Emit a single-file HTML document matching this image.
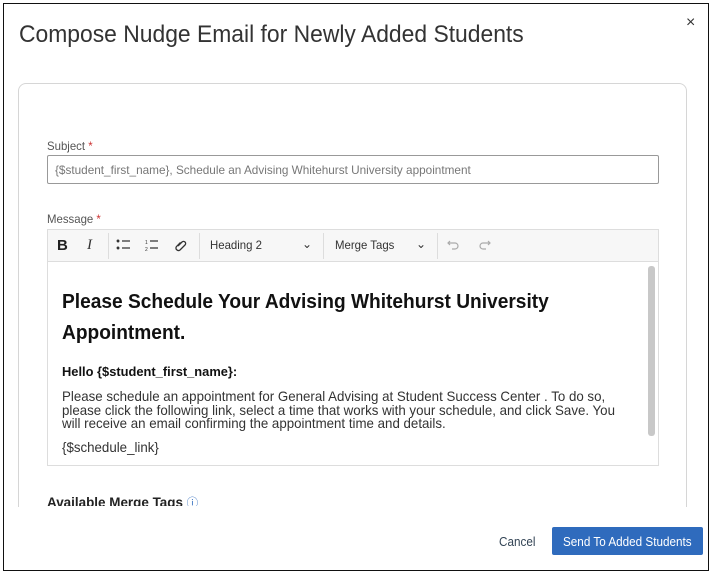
<!DOCTYPE html>
<html><head><style>
*{margin:0;padding:0;box-sizing:border-box}
body{width:713px;height:575px;background:#fff;font-family:"Liberation Sans",Arial,sans-serif;color:#222;position:relative;overflow:hidden}
.a{position:absolute;white-space:nowrap}
.sx{transform-origin:0 0;display:inline-block}
</style></head><body>
<div class="a" style="left:3px;top:3px;width:706px;height:568px;border:1.5px solid #111"></div>
<div class="a" style="left:19px;top:21px;font-size:24px;color:#333"><span class="sx" style="transform:scaleX(0.953)">Compose Nudge Email for Newly Added Students</span></div>
<div class="a" style="left:686px;top:14px;font-size:16px;color:#333">×</div>
<div class="a" style="left:18px;top:83px;width:669px;height:440px;border:1px solid #d6d6d6;border-radius:8px"></div>
<div class="a" style="left:8px;top:507px;width:698px;height:60px;background:#fff"></div>
<div class="a" style="left:47px;top:139px;font-size:12px;color:#555"><span class="sx" style="transform:scaleX(0.95)">Subject <span style="color:#c33">*</span></span></div>
<div class="a" style="left:47px;top:155px;width:612px;height:29px;border:1px solid #999;border-radius:2px"></div>
<div class="a" style="left:55px;top:163px;font-size:12px;color:#777"><span class="sx" style="transform:scaleX(0.98)">{$student_first_name}, Schedule an Advising Whitehurst University appointment</span></div>
<div class="a" style="left:47px;top:212px;font-size:12px;color:#555"><span class="sx" style="transform:scaleX(0.95)">Message <span style="color:#c33">*</span></span></div>
<div class="a" style="left:47px;top:229px;width:612px;height:237px;border:1px solid #ddd"></div>
<div class="a" style="left:48px;top:230px;width:610px;height:32px;background:#f7f7f7;border-bottom:1px solid #ddd"></div>
<div class="a" style="left:57px;top:237px;font-size:15px;font-weight:bold;color:#222">B</div>
<div class="a" style="left:87px;top:237px;font-size:15px;font-style:italic;font-family:'Liberation Serif',serif;color:#333">I</div>
<div class="a" style="left:108px;top:233px;width:1px;height:26px;background:#ddd"></div>
<div class="a" style="left:199px;top:233px;width:1px;height:26px;background:#ddd"></div>
<div class="a" style="left:323px;top:233px;width:1px;height:26px;background:#ddd"></div>
<div class="a" style="left:437px;top:233px;width:1px;height:26px;background:#ddd"></div>
<svg class="a" style="left:115px;top:237px" width="80" height="16" viewBox="0 0 80 16" fill="none" stroke="#333" stroke-width="1.3">
<circle cx="3" cy="4" r=".8" fill="#333"/><circle cx="3" cy="11" r=".8" fill="#333"/><path d="M7 4h8M7 11h8"/>
<text x="30" y="7" font-size="5" fill="#333" stroke="none">1</text><text x="30" y="14" font-size="5" fill="#333" stroke="none">2</text><path d="M35 4h8M35 11h8"/>
<path d="M63 9l4-4a2 2 0 0 1 3 3l-5 5a2.5 2.5 0 0 1-3.5-3.5l4-4"/>
</svg>
<div class="a" style="left:210px;top:238px;font-size:12px;color:#333"><span class="sx" style="transform:scaleX(0.95)">Heading 2</span></div>
<div class="a" style="left:302px;top:237px;font-size:12px;color:#333">⌄</div>
<div class="a" style="left:335px;top:238px;font-size:12px;color:#333"><span class="sx" style="transform:scaleX(0.95)">Merge Tags</span></div>
<div class="a" style="left:416px;top:237px;font-size:12px;color:#333">⌄</div>
<svg class="a" style="left:445px;top:238px" width="50" height="14" viewBox="0 0 50 14" fill="none" stroke="#aaa" stroke-width="1.2"><path d="M3 5h7a3 3 0 0 1 0 6H7M5 3L3 5l2 2"/><path d="M45 5h-7a3 3 0 0 0 0 6h3M43 3l2 2-2 2"/></svg>
<div class="a" style="left:648px;top:266px;width:7px;height:170px;background:#c8c8c8;border-radius:3px"></div>
<div class="a" style="left:62px;top:287px;font-size:20px;font-weight:bold;color:#111;line-height:31px"><span class="sx" style="transform:scaleX(0.957)">Please Schedule Your Advising Whitehurst University<br>Appointment.</span></div>
<div class="a" style="left:62px;top:364px;font-size:13px;font-weight:bold;color:#111"><span class="sx" style="transform:scaleX(0.99)">Hello {$student_first_name}:</span></div>
<div class="a" style="left:62px;top:390px;font-size:14px;color:#333;line-height:13.5px"><span class="sx" style="transform:scaleX(0.95)">Please schedule an appointment for General Advising at Student Success Center . To do so,<br>please click the following link, select a time that works with your schedule, and click Save. You<br>will receive an email confirming the appointment time and details.</span></div>
<div class="a" style="left:62px;top:439px;font-size:14px;color:#333"><span class="sx" style="transform:scaleX(0.95)">{$schedule_link}</span></div>
<div class="a" style="left:47px;top:494px;font-size:14px;font-weight:bold;color:#222;height:12px;overflow:hidden"><span class="sx" style="transform:scaleX(0.96)">Available Merge Tags <span style="color:#2f6bbd;font-weight:normal;font-size:12px">ⓘ</span></span></div>
<div class="a" style="left:499px;top:534px;font-size:13px;color:#345"><span class="sx" style="transform:scaleX(0.9)">Cancel</span></div>
<div class="a" style="left:552px;top:527px;width:151px;height:28px;background:#2f6bbd;border-radius:2px"></div>
<div class="a" style="left:563px;top:534px;font-size:13px;color:#fff"><span class="sx" style="transform:scaleX(0.9)">Send To Added Students</span></div>
</body></html>
